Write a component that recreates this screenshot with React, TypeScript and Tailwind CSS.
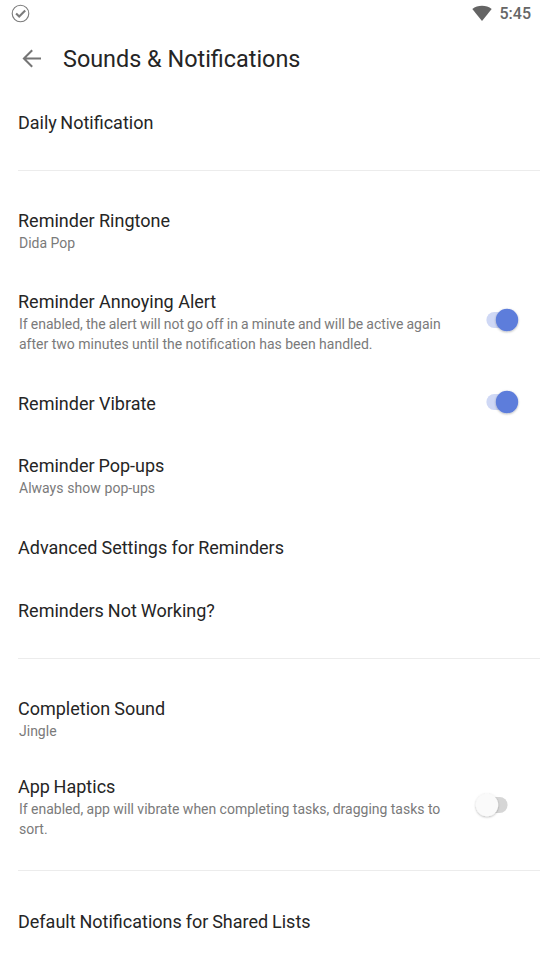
import React from "react";

type RowProps = {
  title: string;
  sub?: string[];
  on?: boolean;
  box: string;
  titleClass?: string;
  subClass?: string;
  toggleClass?: string;
};

function Toggle({ on, className }: { on: boolean; className: string }) {
  return (
    <svg width="50" height="30" viewBox="0 0 50 30" className={`mr-[18px] shrink-0 ${className}`}>
      <defs>
        <filter id="knob" x="-30%" y="-30%" width="160%" height="160%">
          <feDropShadow dx="0" dy="0.8" stdDeviation="0.8" floodColor="#000" floodOpacity="0.3" />
        </filter>
      </defs>
      <rect x="14.4" y="7" width="21.2" height="16" rx="8" fill={on ? "#cfd8f5" : "#d6d6d6"} />
      <circle cx={on ? 35 : 15} cy="15" r="11.2" fill={on ? "#5d7ddb" : "#fafafa"} filter="url(#knob)" />
    </svg>
  );
}

function Row({ title, sub, on, box, titleClass = "", subClass = "", toggleClass = "" }: RowProps) {
  return (
    <div className={`flex items-start justify-between ${box}`}>
      <div>
        <div className={`whitespace-nowrap text-[18px] leading-6 text-[#252525] ${titleClass}`}>{title}</div>
        {sub?.map((line, i) => (
          <div key={line} className={`ml-px whitespace-nowrap text-[14px] leading-5 text-[#7a7a7a] ${i === 0 ? subClass : ""}`}>
            {line}
          </div>
        ))}
      </div>
      {on !== undefined && <Toggle on={on} className={toggleClass} />}
    </div>
  );
}

export default function App() {
  return (
    <div className="h-[960px] w-[540px] overflow-hidden bg-white font-[Roboto,sans-serif]">
      <div className="flex h-7 items-center justify-between pl-[11px] pr-[9px]">
        <svg width="19" height="19" viewBox="0 0 19 19" className="mb-[2px]" fill="none" stroke="#7c7c7c">
          <circle cx="9.5" cy="9.5" r="8.3" strokeWidth="1.1" />
          <path d="M5.1 9.4l3.1 3.1 6-6.1" strokeWidth="2.1" />
        </svg>
        <div className="flex items-center">
          <svg width="20" height="17" viewBox="0 0 20 17" className="mb-px mr-2 block">
            <path d="M0.3 4C5.6-.2 14.4-.2 19.7 4L10 16Z" fill="#646464" />
          </svg>
          <span className="text-[16px] font-medium text-[#666]">5:45</span>
        </div>
      </div>
      <header className="flex h-12 items-start pl-[22px] pt-[15px]">
        <svg width="20" height="20" viewBox="0 0 20 20" className="mr-[21px] mt-[6px]" fill="none" stroke="#757575" strokeWidth="2">
          <path d="M19 9.5H2M10.2 1.2L1.9 9.5l8.3 8.3" />
        </svg>
        <h1 className="whitespace-nowrap text-[23.4px] leading-8 text-[#252525]">Sounds &amp; Notifications</h1>
      </header>
      <main className="pl-[18px] pt-[35px]">
        <Row title="Daily Notification" box="mb-[38px] h-[60px] border-b border-[#ececec]" titleClass="[word-spacing:-1px]" />
        <Row title="Reminder Ringtone" sub={["Dida Pop"]} box="h-[81px]" />
        <Row
          title="Reminder Annoying Alert"
          sub={[
            "If enabled, the alert will not go off in a minute and will be active again",
            "after two minutes until the notification has been handled.",
          ]}
          on
          box="h-[102px]"
          subClass="[word-spacing:-0.4px]"
          toggleClass="mt-[15px]"
        />
        <Row title="Reminder Vibrate" on box="h-[62px]" toggleClass="-mt-[5px]" />
        <Row title="Reminder Pop-ups" sub={["Always show pop-ups"]} box="h-[82px]" subClass="[word-spacing:0.4px]" titleClass="[word-spacing:-0.5px]" />
        <Row title="Advanced Settings for Reminders" box="h-[63px]" titleClass="[word-spacing:-0.3px]" />
        <Row title="Reminders Not Working?" box="mb-[38px] h-[60px] border-b border-[#ececec]" titleClass="[word-spacing:-0.5px]" />
        <Row title="Completion Sound" sub={["Jingle"]} box="h-[78px]" titleClass="[word-spacing:-0.5px]" />
        <Row
          title="App Haptics"
          sub={["If enabled, app will vibrate when completing tasks, dragging tasks to", "sort."]}
          on={false}
          box="mb-[39px] h-[96px] border-b border-[#ececec]"
          titleClass="[word-spacing:-0.8px]"
          subClass="[word-spacing:-0.1px]"
          toggleClass="mt-[15px]"
        />
        <Row title="Default Notifications for Shared Lists" box="h-12" titleClass="[word-spacing:-0.6px]" />
      </main>
    </div>
  );
}
